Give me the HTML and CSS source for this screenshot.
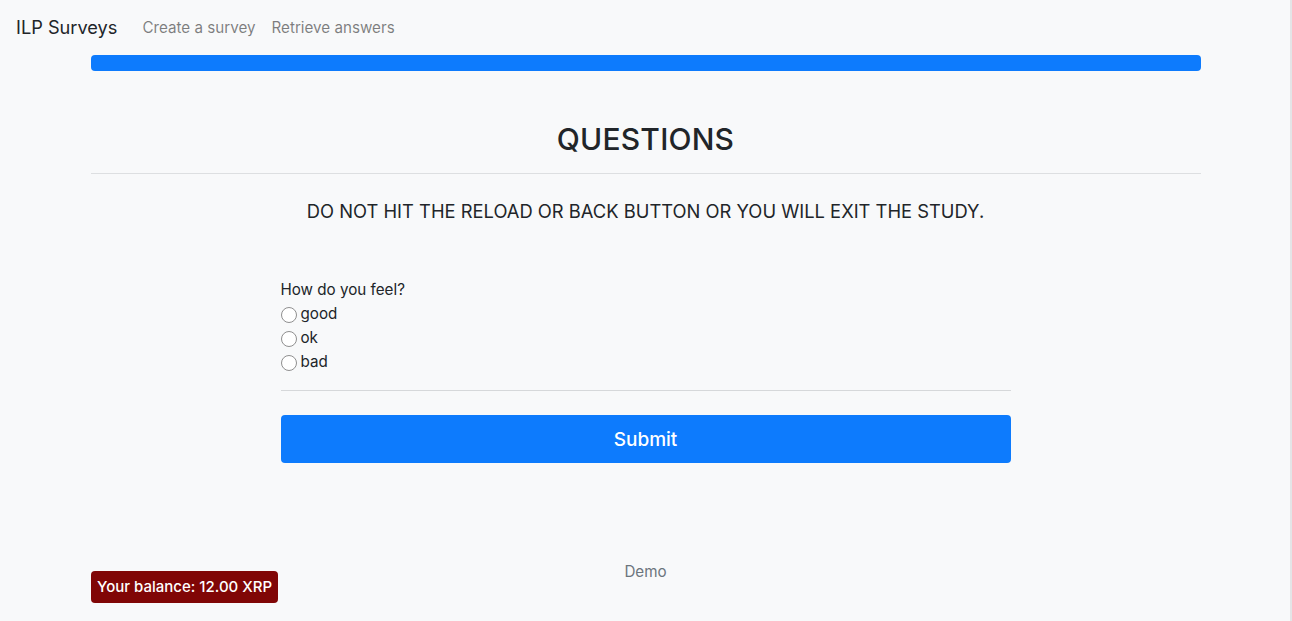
FILE: index.html
```html
<!DOCTYPE html>
<html>
<head>
<meta charset="utf-8">
<link rel="stylesheet" href="styles.css">
</head>
<body>
<div class="page">
  <nav class="navbar">
    <a class="brand">ILP Surveys</a>
    <a class="nav-link">Create a survey</a>
    <a class="nav-link">Retrieve answers</a>
  </nav>
  <div class="container">
    <div class="progress"><div class="progress-bar"></div></div>
    <h2 class="title">QUESTIONS</h2>
    <hr class="rule">
    <h5 class="warning">DO NOT HIT THE RELOAD OR BACK BUTTON OR YOU WILL EXIT THE STUDY.</h5>
    <form class="survey">
      <div class="question">How do you feel?</div>
      <label class="option"><span class="radio"></span>good</label>
      <label class="option"><span class="radio"></span>ok</label>
      <label class="option"><span class="radio"></span>bad</label>
      <hr class="rule form-rule">
      <button type="button" class="submit">Submit</button>
    </form>
    <div class="footer">Demo</div>
  </div>
  <div class="balance">Your balance: 12.00 XRP</div>
</div>
</body>
</html>
```
FILE: styles.css
```css
html, body {
  margin: 0;
  padding: 0;
  height: 100%;
}
body {
  background: #f8f9fa;
  font-family: Inter, "Noto Sans", "Liberation Sans", sans-serif;
  color: #212529;
  font-size: 16px;
  line-height: 1.5;
}
.page {
  min-height: 621px;
  border-right: 2px solid #e4e5e7;
  box-sizing: border-box;
  width: 1292px;
}
.navbar {
  display: flex;
  align-items: center;
  height: 55px;
  padding: 1px 16px 0;
  box-sizing: border-box;
}
.brand {
  font-size: 18.2px;
  color: #212529;
  margin-right: 25px;
}
.nav-link {
  font-size: 15.2px;
  color: rgba(0, 0, 0, 0.5);
  margin-right: 16px;
}
.container {
  width: 1110px;
  margin: 0 auto;
  padding-left: 1px;
}
.progress {
  height: 16px;
  border-radius: 4px;
  background: #e9ecef;
  overflow: hidden;
}
.progress-bar {
  height: 100%;
  width: 100%;
  background: #0d7bfd;
}
.title {
  margin: 49px 0 0;
  text-align: center;
  font-size: 30px;
  font-weight: 500;
  line-height: 38px;
  letter-spacing: 0.2px;
}
.rule {
  border: 0;
  border-top: 1px solid #dddfe1;
  margin: 15px 0 0;
}
.warning {
  margin: 25px 0 0;
  text-align: center;
  font-size: 18.35px;
  font-weight: 400;
  line-height: 24px;
}
.survey {
  width: 730px;
  margin: 55px auto 0;
  display: flex;
  flex-direction: column;
}
.question {
  font-size: 15.2px;
  line-height: 24px;
}
.option {
  display: flex;
  align-items: center;
  font-size: 15.2px;
  line-height: 24px;
}
.radio {
  width: 16px;
  height: 16px;
  border: 1px solid #8f8f8f;
  border-radius: 50%;
  background: #fff;
  margin-right: 4px;
  box-sizing: border-box;
  position: relative;
  top: 1px;
}
.form-rule {
  margin-top: 16px;
  border-top-color: #d6d8da;
}
.submit {
  margin-top: 24px;
  height: 48px;
  border: 0;
  border-radius: 4px;
  background: #0d7bfd;
  color: #fff;
  font-family: inherit;
  font-size: 19px;
  font-weight: 500;
}
.footer {
  margin-top: 98px;
  text-align: center;
  color: #6c757d;
  font-size: 15.2px;
}
.balance {
  position: fixed;
  left: 91px;
  bottom: 18px;
  height: 32px;
  padding: 0 6px;
  display: flex;
  align-items: center;
  background: #800606;
  color: #fff;
  border-radius: 4px;
  font-size: 15px;
  font-weight: 500;
}
```
